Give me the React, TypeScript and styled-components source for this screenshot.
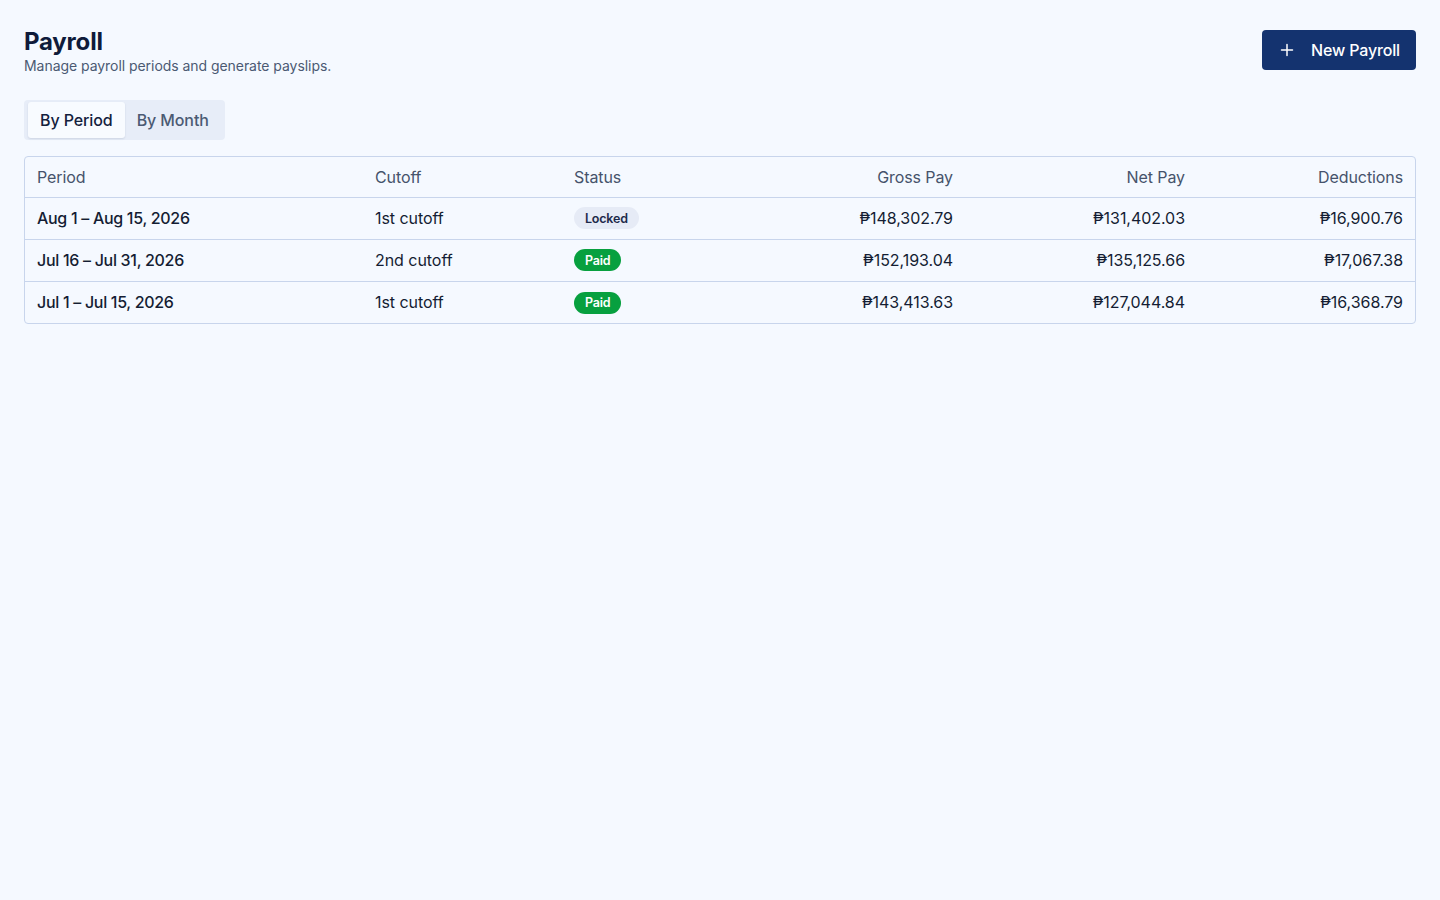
import React, { useState } from 'react';
import styled, { createGlobalStyle } from 'styled-components';

const GlobalStyle = createGlobalStyle`
  html, body {
    margin: 0;
    padding: 0;
    background: #f5f9ff;
    font-family: Inter, "Noto Sans", "Liberation Sans", sans-serif;
    color: #111c36;
  }
  * { box-sizing: border-box; }
`;

const Page = styled.div`
  min-height: 900px;
  padding: 28px 24px 24px;
  background: #f5f9ff;
`;

const Header = styled.div`
  display: flex;
  justify-content: space-between;
  align-items: flex-start;
`;

const TitleBlock = styled.div`
  display: flex;
  flex-direction: column;
`;

const Title = styled.h1`
  margin: 0;
  font-size: 24px;
  line-height: 28px;
  font-weight: 700;
  color: #0f1b3a;
  letter-spacing: -0.2px;
`;

const Subtitle = styled.p`
  margin: 0;
  font-size: 14px;
  line-height: 20px;
  color: #4b5a73;
  letter-spacing: -0.05px;
`;

const PrimaryButton = styled.button`
  display: flex;
  align-items: center;
  gap: 17px;
  height: 40px;
  margin-top: 2px;
  padding: 0 16px 0 18px;
  border: none;
  border-radius: 4px;
  background: #14336f;
  color: #ffffff;
  font-family: inherit;
  font-size: 16px;
  font-weight: 500;
  letter-spacing: -0.15px;
  cursor: pointer;
`;

const Tabs = styled.div`
  display: inline-flex;
  margin-top: 24px;
  padding: 2px 4px;
  border-radius: 4px;
  background: #e7edf8;
`;

const Tab = styled.button<{ $active?: boolean }>`
  height: 36px;
  padding: 0 12px;
  border: none;
  border-radius: 3px;
  background: ${p => (p.$active ? '#f8fbff' : 'transparent')};
  box-shadow: ${p => (p.$active ? '0 1px 2px rgba(20, 40, 80, 0.12)' : 'none')};
  color: ${p => (p.$active ? '#14213d' : '#4b5a73')};
  font-family: inherit;
  font-size: 16px;
  font-weight: 500;
  letter-spacing: -0.1px;
  cursor: pointer;
`;

const TableWrap = styled.div`
  margin-top: 16px;
  border: 1px solid #c8d5ec;
  border-radius: 4px;
  overflow: hidden;
`;

const Table = styled.table`
  width: 100%;
  border-collapse: collapse;
  table-layout: fixed;
`;

const Th = styled.th<{ $right?: boolean }>`
  height: 40px;
  padding: 0 12px;
  text-align: ${p => (p.$right ? 'right' : 'left')};
  font-size: 16px;
  font-weight: 400;
  color: #46536b;
  letter-spacing: -0.1px;
  border-bottom: 1px solid #c8d5ec;
`;

const Tr = styled.tr`
  &:not(:last-child) td {
    border-bottom: 1px solid #c8d5ec;
  }
`;

const Td = styled.td<{ $right?: boolean; $strong?: boolean }>`
  height: 42px;
  padding: 0 12px;
  text-align: ${p => (p.$right ? 'right' : 'left')};
  font-size: 16px;
  font-weight: ${p => (p.$strong ? 500 : 400)};
  color: #141d33;
  letter-spacing: ${p => (p.$strong ? '-0.3px' : '-0.05px')};
`;

const Badge = styled.span<{ $tone: 'locked' | 'paid' }>`
  display: inline-flex;
  align-items: center;
  height: 22px;
  padding: 0 11px;
  border-radius: 11px;
  font-size: 12.5px;
  font-weight: 600;
  letter-spacing: -0.2px;
  background: ${p => (p.$tone === 'paid' ? '#07a03f' : '#e6ebf6')};
  color: ${p => (p.$tone === 'paid' ? '#ffffff' : '#1d2a4a')};
`;

const PlusIcon = () => (
  <svg width="14" height="14" viewBox="0 0 14 14" fill="none">
    <path d="M7 1.5v11M1.5 7h11" stroke="#ffffff" strokeWidth="1.5" strokeLinecap="round" />
  </svg>
);

type Row = {
  period: string;
  cutoff: string;
  status: 'Locked' | 'Paid';
  gross: string;
  net: string;
  deductions: string;
};

const rows: Row[] = [
  { period: 'Aug 1 – Aug 15, 2026', cutoff: '1st cutoff', status: 'Locked', gross: '₱148,302.79', net: '₱131,402.03', deductions: '₱16,900.76' },
  { period: 'Jul 16 – Jul 31, 2026', cutoff: '2nd cutoff', status: 'Paid', gross: '₱152,193.04', net: '₱135,125.66', deductions: '₱17,067.38' },
  { period: 'Jul 1 – Jul 15, 2026', cutoff: '1st cutoff', status: 'Paid', gross: '₱143,413.63', net: '₱127,044.84', deductions: '₱16,368.79' },
];

const App = () => {
  const [view, setView] = useState<'period' | 'month'>('period');

  return (
    <>
      <GlobalStyle />
      <Page>
        <Header>
          <TitleBlock>
            <Title>Payroll</Title>
            <Subtitle>Manage payroll periods and generate payslips.</Subtitle>
          </TitleBlock>
          <PrimaryButton>
            <PlusIcon />
            New Payroll
          </PrimaryButton>
        </Header>

        <Tabs>
          <Tab $active={view === 'period'} onClick={() => setView('period')}>By Period</Tab>
          <Tab $active={view === 'month'} onClick={() => setView('month')}>By Month</Tab>
        </Tabs>

        <TableWrap>
          <Table>
            <colgroup>
              <col style={{ width: 338 }} />
              <col style={{ width: 199 }} />
              <col style={{ width: 171 }} />
              <col style={{ width: 232 }} />
              <col style={{ width: 232 }} />
              <col />
            </colgroup>
            <thead>
              <tr>
                <Th>Period</Th>
                <Th>Cutoff</Th>
                <Th>Status</Th>
                <Th $right>Gross Pay</Th>
                <Th $right>Net Pay</Th>
                <Th $right>Deductions</Th>
              </tr>
            </thead>
            <tbody>
              {rows.map(r => (
                <Tr key={r.period}>
                  <Td $strong>{r.period}</Td>
                  <Td>{r.cutoff}</Td>
                  <Td>
                    <Badge $tone={r.status === 'Paid' ? 'paid' : 'locked'}>{r.status}</Badge>
                  </Td>
                  <Td $right>{r.gross}</Td>
                  <Td $right>{r.net}</Td>
                  <Td $right>{r.deductions}</Td>
                </Tr>
              ))}
            </tbody>
          </Table>
        </TableWrap>
      </Page>
    </>
  );
};

export default App;
